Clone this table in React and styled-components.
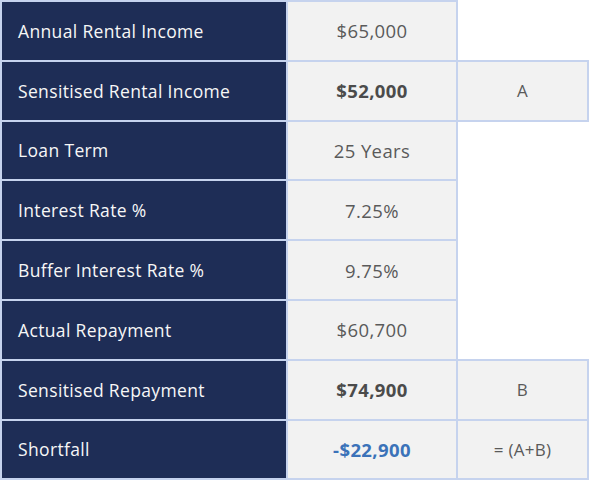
import React from "react";
import styled, { createGlobalStyle } from "styled-components";

const GlobalStyle = createGlobalStyle`
  html, body {
    margin: 0;
    padding: 0;
    background: #ffffff;
    font-family: "Open Sans", Lato, "Liberation Sans", sans-serif;
  }
`;

const Table = styled.table`
  border-collapse: collapse;
  table-layout: fixed;
  width: 587px;
`;

const Col = styled.col`
  width: ${(p) => p.$w}px;
`;

const Row = styled.tr`
  height: 59.8px;
`;

const Label = styled.th`
  padding: 0 0 0 16px;
  background: #1e2d56;
  color: #f7f7f7;
  font-size: 17.5px;
  font-weight: 400;
  text-align: left;
  border: 2px solid #c6d3ee;
  letter-spacing: 0.35px;
`;

const Value = styled.td`
  background: #f2f2f2;
  color: ${(p) => (p.$tone === "blue" ? "#3b72b9" : p.$bold ? "#4b4b4b" : "#5a5a5a")};
  font-size: 18.5px;
  font-weight: ${(p) => (p.$bold ? 700 : 400)};
  letter-spacing: 0.4px;
  text-align: center;
  border: 2px solid #c6d3ee;
`;

const Note = styled.td`
  background: ${(p) => (p.$empty ? "transparent" : "#f2f2f2")};
  color: #5a5a5a;
  font-size: 17px;
  letter-spacing: 0.3px;
  text-align: center;
  border: ${(p) => (p.$empty ? "none" : "2px solid #c6d3ee")};
`;

const rows = [
  { label: "Annual Rental Income", value: "$65,000" },
  { label: "Sensitised Rental Income", value: "$52,000", bold: true, note: "A" },
  { label: "Loan Term", value: "25 Years" },
  { label: "Interest Rate %", value: "7.25%" },
  { label: "Buffer Interest Rate %", value: "9.75%" },
  { label: "Actual Repayment", value: "$60,700" },
  { label: "Sensitised Repayment", value: "$74,900", bold: true, note: "B" },
  { label: "Shortfall", value: "-$22,900", bold: true, tone: "blue", note: "= (A+B)" },
];

export default function App() {
  return (
    <>
      <GlobalStyle />
      <Table>
        <colgroup>
          <Col $w={286} />
          <Col $w={170} />
          <Col $w={131} />
        </colgroup>
        <tbody>
          {rows.map((r) => (
            <Row key={r.label}>
              <Label scope="row">{r.label}</Label>
              <Value $bold={r.bold} $tone={r.tone}>{r.value}</Value>
              <Note $empty={!r.note}>{r.note}</Note>
            </Row>
          ))}
        </tbody>
      </Table>
    </>
  );
}
